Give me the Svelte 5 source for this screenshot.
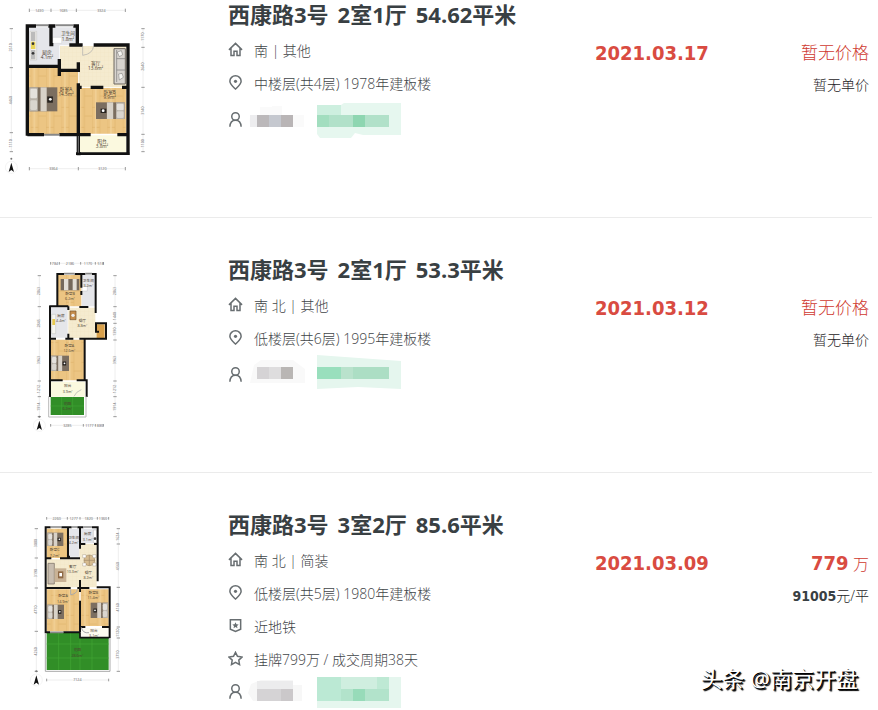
<script>
  const listings = [
    {
      plan: 'a',
      title: ['西康路3号', '2室1厅', '54.62平米'],
      lines: [['house', '南 | 其他'], ['pin', '中楼层(共4层) 1978年建板楼']],
      date: '2021.03.17'
    },
    {
      plan: 'b',
      title: ['西康路3号', '2室1厅', '53.3平米'],
      lines: [['house', '南 北 | 其他'], ['pin', '低楼层(共6层) 1995年建板楼']],
      date: '2021.03.12'
    },
    {
      plan: 'c',
      title: ['西康路3号', '3室2厅', '85.6平米'],
      lines: [
        ['house', '南 北 | 简装'],
        ['pin', '低楼层(共5层) 1980年建板楼'],
        ['badge', '近地铁'],
        ['star', '挂牌799万 / 成交周期38天']
      ],
      date: '2021.03.09',
      total: '779',
      unit: '91005'
    }
  ];
</script>

{#snippet icon(name)}
  <svg class="icon" viewBox="0 0 16 16" aria-hidden="true">
    {#if name === 'house'}
      <path d="M1 8.4 8 1.5 15 8.4M3.2 6.5V14.3H6.4V9.8H9.6V14.3H12.8V6.5" />
    {:else if name === 'pin'}
      <path d="M8 15C5.5 12.6 2 9.8 2 6.6A6 5.7 0 0 1 14 6.6C14 9.8 10.5 12.6 8 15Z" />
      <circle class="solid" cx="8" cy="6.7" r="1.7" />
    {:else if name === 'badge'}
      <path d="M2.5 1.8H13.5V12L8 14.4 2.5 12Z" />
      <path class="solid" d="m8 4.4 1 2.2 2.4.3-1.8 1.6.5 2.4L8 9.7l-2.1 1.2.5-2.4-1.8-1.6 2.4-.3Z" />
    {:else if name === 'star'}
      <path d="m8 1.4 2.1 4.3 4.9.7-3.5 3.3.8 4.8L8 12.2l-4.3 2.3.8-4.8L1 6.4l4.9-.7Z" />
    {:else}
      <circle cx="8" cy="4.8" r="4" />
      <path d="M2 15.8C2.2 11.6 4.4 8.8 8 8.8S13.8 11.6 14 15.8" />
    {/if}
  </svg>
{/snippet}

{#snippet label(x, y, name, area)}
  <text {x} {y}>{name}</text>
  <text {x} y={y + 16}>{area}m²</text>
{/snippet}

{#snippet bed(x, y, w, h)}
  <rect {x} {y} width={w} height={h} fill="#7b6e60" />
  <rect {x} {y} width={w * 0.3} height={h} fill="#b9b3aa" />
  <rect x={x + w * 0.4} {y} width={w * 0.22} height={h} fill="#d8d2c8" />
  <rect x={x + 3} y={y + 4} width={w * 0.24} height={h * 0.4} rx="4" fill="#e4e1dc" />
  <rect x={x + 3} y={y + h * 0.54} width={w * 0.24} height={h * 0.4} rx="4" fill="#d9d5ce" />
  <rect x={x + w * 0.64} y={y + h * 0.38} width={w * 0.2} height={h * 0.26} fill="#27231f" />
  <circle cx={x + w * 0.75} cy={y + h * 0.5} r={w * 0.05} fill="#fff" />
{/snippet}

{#snippet bedFlip(x, y, w, h)}
  <g transform="translate({2 * x + w} 0) scale(-1 1)">{@render bed(x, y, w, h)}</g>
{/snippet}

{#snippet compass(x, y)}
  <circle cx={x} cy={y} r="18" fill="none" stroke="#ddd" />
  <path d="M{x} {y - 14}l8 28-8-6-8 6Z" fill="#111" />
  <circle cx={x} cy={y - 26} r="3" fill="#777" />
{/snippet}

{#snippet woods()}
  <defs>
    <pattern id="wood" width="46" height="60" patternUnits="userSpaceOnUse">
      <rect width="46" height="60" fill="#ecc583" />
      <path d="M0 0V60M23 0V60M0 22H23M23 48H46" stroke="#e0b26c" stroke-width="2" />
      <path d="M11 0V60" stroke="#f1d095" stroke-width="5" />
    </pattern>
    <pattern id="tile" width="12" height="12" patternUnits="userSpaceOnUse">
      <rect width="12" height="12" fill="#f5ebcf" />
      <path d="M0 0H12M0 0V12" stroke="#eee0bd" />
    </pattern>
  </defs>
{/snippet}

{#snippet planA()}
  <svg class="plan" viewBox="0 0 480 540" role="img" aria-label="户型图">
    {@render woods()}
    <path class="dim" d="M88 31H376M34 86V455M429 86V455M88 506H376" />
    <path class="tick" d="M88 26V36M153 26V36M229 26V36M376 26V36M29 86H39M29 203H39M29 398H39M29 455H39M424 86H434M424 142H434M424 262H434M424 403H434M424 455H434M88 501V511M235 501V511M376 501V511" />
    <g class="scale">
      <text x="118" y="35">1430</text><text x="190" y="35">1685</text><text x="304" y="35">3324</text>
      <text x="160" y="510">3364</text><text x="307" y="510">3120</text>
      <text transform="translate(37 142) rotate(-90)">2510</text><text transform="translate(37 300) rotate(-90)">4460</text>
      <text transform="translate(37 430) rotate(-90)">1110</text>
      <text transform="translate(433 110) rotate(-90)">1170</text><text transform="translate(433 200) rotate(-90)">2640</text>
      <text transform="translate(433 332) rotate(-90)">3140</text><text transform="translate(433 430) rotate(-90)">1100</text>
    </g>
    <path d="M82 78H232V135H384V462H232V404H82Z" fill="#fff" />
    <path d="M86 82H178V198H86ZM153 82H228V136H153Z" fill="#e5e6ea" />
    <path d="M180 138H380V262H236V210H180Z" fill="url(#tile)" />
    <path d="M86 203H178V211H234V402H86ZM238 264H379V401H238Z" fill="url(#wood)" />
    <path d="M236 406H378V458H236Z" fill="#fbf9df" />
    <path d="M90 94H110V180H90Z" fill="#f3f1ec" stroke="#aaa" />
    <path d="M93 96H106V123H93ZM93 150H106V178H93Z" fill="#bbb" />
    <path d="M93 125H106V147H93Z" fill="#e9d558" />
    <circle cx="99" cy="131" r="4" fill="#333" /><circle cx="99" cy="160" r="4" fill="#333" />
    <path d="M158 112H185V130H158Z" fill="#fff" stroke="#bbb" />
    <path d="M342 146H376V252H342Z" fill="#d8d4cf" stroke="#6d665f" stroke-width="3" />
    <path d="M350 176H376M350 210H376M350 150V246" stroke="#777" stroke-width="2" />
    <path d="M352 156l12-4 4 12-10 6ZM356 222l10-2 4 12-12 8Z" fill="#f6f5f2" stroke="#333" />
    {@render bed(88, 262, 84, 72)}
    {@render bedFlip(288, 307, 86, 50)}
    <path class="wall" d="M82 407V78H108M145 78H166M153 78V134H160M220 78H232V135H248M281 135H384V465M208 135H232M82 199H178V177M178 199V228M178 211H235V187M235 250V461H242M235 262H245M272 262H310M366 262H384M82 404H132M178 404H272M352 404H384" />
    <path d="M228 461H388" stroke="#111" stroke-width="8" />
    <path d="M108 76H145M166 76H220M132 404H178" stroke="#888" stroke-width="6" />
    <path d="M248 138V166Q278 162 281 138M235 408V458" fill="none" stroke="#aaa" stroke-width="2" />
    {@render label(141, 162, '厨房', '4.1')}
    {@render label(204, 106, '卫生间', '1.8')}
    {@render label(287, 195, '客厅', '13.6')}
    {@render label(198, 272, '卧室A', '14.5')}
    {@render label(329, 281, '卧室B', '9.9')}
    {@render label(306, 428, '阳台', '3.8')}
    {@render compass(34, 502)}
  </svg>
{/snippet}

{#snippet planB()}
  <svg class="plan" viewBox="-60 0 480 540" role="img" aria-label="户型图">
    <path class="dim" d="M92 25H250M58 62V485M285 62V485M92 511H250" />
    <path class="tick" d="M92 21V29M118 21V29M182 21V29M226 21V29M250 21V29M53 62H63M53 155H63M53 250H63M53 378H63M53 425H63M53 485H63M280 62H290M280 155H290M280 205H290M280 255H290M280 378H290M280 425H290M280 485H290M92 507V515M190 507V515M226 507V515M250 507V515" />
    <g class="scale">
      <text x="105" y="29">784</text><text x="150" y="29">2186</text><text x="204" y="29">1170</text><text x="242" y="29">518</text>
      <text x="142" y="515">3285</text><text x="208" y="515">1177</text><text x="240" y="515">880</text>
      <text transform="translate(61 108) rotate(-90)">2863</text><text transform="translate(61 205) rotate(-90)">2845</text>
      <text transform="translate(61 315) rotate(-90)">3963</text><text transform="translate(61 402) rotate(-90)">1212</text>
      <text transform="translate(61 455) rotate(-90)">1914</text><text transform="translate(288 108) rotate(-90)">2863</text>
      <text transform="translate(288 183) rotate(-90)">1440</text><text transform="translate(288 230) rotate(-90)">1390</text>
      <text transform="translate(288 315) rotate(-90)">3963</text><text transform="translate(288 402) rotate(-90)">1212</text>
      <text transform="translate(288 455) rotate(-90)">1914</text>
    </g>
    <path d="M114 60H184V154H114ZM92 254H193V376H92Z" fill="url(#wood)" />
    <path d="M186 60H226V154H186ZM92 158H143V248H92Z" fill="#e5e6ea" />
    <path d="M145 158H226V206H250V250H145Z" fill="url(#tile)" />
    <path d="M230 208H254V252H230Z" fill="#d8a04b" />
    <path d="M92 380H195V425H92Z" fill="#fbf9df" />
    <path d="M92 426H192V480H92Z" fill="#318e27" />
    <path d="M125 426V480M158 426V480M92 453H192" stroke="#41a334" stroke-width="2" />
    <path d="M95 178H107V236H95Z" fill="#f5f5f0" stroke="#aaa" />
    <path d="M97 192H105V210H97Z" fill="#e7c951" />
    <path d="M186 94H202V108H186Z" fill="#fff" stroke="#aaa" />
    <path d="M122 72H178V106H122Z" fill="#75685b" /><path d="M132 72H145V106H132ZM158 72H170V106H158Z" fill="#e3ded6" />
    <path d="M150 168H168V194H150Z" fill="#c58d4c" stroke="#76512b" stroke-width="2" /><circle cx="159" cy="181" r="5" fill="#eee" />
    {@render bed(93, 302, 54, 46)}
    <path class="wall thin" d="M112 156V57H132M164 57H196M184 57V98M216 57H227V174M184 108V120M88 154H145M178 156H205M90 152V426M145 154V165M145 236V251M88 251H108M136 251H160M178 251H258V205H228V230H237M194 251V376H200V426M90 376H128M170 376H200" />
    <path d="M132 56H164M196 56H216" stroke="#888" stroke-width="5" />
    <path d="M86 424V486H198V424" fill="none" stroke="#bbb" stroke-width="3" />
    <path d="M162 424Q168 410 184 404" fill="none" stroke="#aaa" stroke-width="2" />
    <g class="small">
      {@render label(150, 120, '卧室B', '6.2')}
      {@render label(205, 80, '卫生间', '3.2')}
      {@render label(123, 186, '厨房', '4.4')}
      {@render label(187, 200, '餐厅', '8.8')}
      {@render label(148, 275, '卧室A', '12.6')}
      {@render label(143, 397, '阳台', '3.9')}
      {@render label(142, 450, '花园', '6.2')}
    </g>
    {@render compass(58, 511)}
  </svg>
{/snippet}

{#snippet planC()}
  <svg class="plan" viewBox="-60 6 480 540" role="img" aria-label="户型图">
    <path class="dim" d="M80 31H266M49 62V490M295 62V490M80 516H266" />
    <path class="tick" d="M80 27V35M142 27V35M180 27V35M232 27V35M266 27V35M44 62H54M44 150H54M44 240H54M44 370H54M44 490H54M290 62H300M290 108H300M290 238H300M290 357H300M290 390H300M290 490H300M80 512V520M266 512V520" />
    <g class="scale">
      <text x="110" y="35">2260</text><text x="161" y="35">1277</text><text x="206" y="35">1820</text><text x="249" y="35">1360</text>
      <text x="172" y="520">7124</text>
      <text transform="translate(52 105) rotate(-90)">3080</text><text transform="translate(52 195) rotate(-90)">3190</text>
      <text transform="translate(52 305) rotate(-90)">4710</text><text transform="translate(52 430) rotate(-90)">4260</text>
      <text transform="translate(298 86) rotate(-90)">1624</text><text transform="translate(298 174) rotate(-90)">4560</text>
      <text transform="translate(298 298) rotate(-90)">4160</text><text transform="translate(298 374) rotate(-90)">1120</text>
      <text transform="translate(298 440) rotate(-90)">3710</text>
    </g>
    <path d="M80 62H142V150H80ZM80 244H178V370H80ZM182 244H266V354H182Z" fill="url(#wood)" />
    <path d="M146 62H178V146H146ZM182 62H230V106H182Z" fill="#e5e6ea" />
    <path d="M80 154H178V108H230V238H80Z" fill="url(#tile)" />
    <path d="M182 360H266V388H182Z" fill="#fcfaf0" />
    <path d="M80 374H180V390H266V486H80Z" fill="#318e27" />
    <path d="M116 374V486M152 374V486M180 390V486M216 390V486M80 408H266M80 450H266" stroke="#42a735" stroke-width="2" />
    {@render bed(82, 74, 48, 40)}
    {@render bed(82, 290, 50, 43)}
    {@render bedFlip(212, 284, 52, 46)}
    <path d="M84 166H103V228H84Z" fill="#c8bdaf" stroke="#72685e" stroke-width="2" />
    <path d="M104 181H139V222H104Z" fill="#c9b295" /><path d="M114 190H130V211H114Z" fill="#8e6945" /><path d="M118 195H126V205H118Z" fill="#fff" />
    <circle cx="208" cy="157" r="16" fill="#d6bb8f" stroke="#a08a68" stroke-width="2" />
    <path d="M208 141V173M192 157H224" stroke="#a08a68" stroke-width="2" />
    <path d="M188 140H198V149H188ZM218 140H228V149H218ZM188 165H198V174H188ZM218 165H228V174H218Z" fill="#fff" stroke="#8c7c66" />
    <path d="M220 66H230V104H220Z" fill="#fff" stroke="#999" /><circle cx="225" cy="92" r="4" fill="#444" />
    <path class="wall thin" d="M77 376V58H92M124 58H155M144 58V146H150M172 58H190M180 58V122M216 58H233V108H222M180 108H196M77 151H94M120 151H180M233 108V220M180 216V238M75 240H152M172 240H208M230 238H269V390M180 240V252M180 278V373M77 373H90M130 373H180M180 357H196M246 357H269" />
    <path d="M92 57H124M155 57H172M190 57H216M90 373H130" stroke="#888" stroke-width="5" />
    <path d="M180 373V389H268" fill="none" stroke="#111" stroke-width="5" />
    <path d="M76 376V490H270V390M184 358Q188 377 207 374M152 244V260Q170 258 172 244" fill="none" stroke="#aaa" stroke-width="3" />
    <g class="small">
      {@render label(104, 130, '卧室C', '7.2')}
      {@render label(161, 93, '卫生间', '4.2')}
      {@render label(203, 82, '厨房', '3.1')}
      {@render label(158, 180, '客厅', '10.3')}
      {@render label(205, 198, '餐厅', '8.2')}
      {@render label(129, 268, '卧室A', '14.9')}
      {@render label(220, 258, '卧室B', '11.4')}
      {@render label(222, 372, '阳台', '3.1')}
      {@render label(172, 430, '花园', '28.6')}
    </g>
    {@render compass(49, 516)}
  </svg>
{/snippet}

{#snippet mosaic(plan)}
  <svg class="mosaic" viewBox="0 0 160 40" aria-hidden="true">
    {#if plan === 'a'}
      <path d="M12 7h12v-1h10v9h22v12H3q-3-6 0-12h9Z" fill="#fafafa" />
      <path d="M2 15H9V27H2Z" fill="#ededef" />
      <path d="M9 15H21V27H9Z" fill="#bbb8ba" /><path d="M21 15H33V27H21Z" fill="#c5c8cf" /><path d="M33 15H45V27H33Z" fill="#b9b5b6" />
      <path d="M69 5H93L96 3H153V35H115L107 33L103 38H72L69 34Z" fill="#e6f7ef" />
      <path d="M69 5H93V15H69Z" fill="#cdefdf" /><path d="M69 15H141V27H69Z" fill="#b1e1c9" />
      <path d="M69 15H81V27H69Z" fill="#a2debf" /><path d="M105 15H117V27H105Z" fill="#8ed6b1" />
    {:else if plan === 'b'}
      <path d="M6 10 13 5H45L57 14V28H2Z" fill="#f9f9f9" />
      <path d="M9 12H21V24H9Z" fill="#d5d3d5" /><path d="M21 12H33V24H21Z" fill="#deddde" /><path d="M33 12H45V24H33Z" fill="#b9b6b4" />
      <path d="M69 0 153 6V34L110 32 69 34Z" fill="#e5f6ee" />
      <path d="M69 12H141V24H69Z" fill="#acdec4" /><path d="M69 12H93V24H69Z" fill="#99dfbd" /><path d="M93 12H105V24H93Z" fill="#b9e2cc" />
    {:else}
      <path d="M3 12 13 8H45V13H54V29H5L0 21Z" fill="#f7f7f7" />
      <path d="M9 9H45V17H9Z" fill="#ececed" /><path d="M9 17H45V29H9Z" fill="#d5d3d5" /><path d="M33 17H45V29H33Z" fill="#cbc8ca" />
      <path d="M69 5H153V36H69Z" fill="#e5f6ee" />
      <path d="M69 5H93V29H69Z" fill="#bbe9d4" /><path d="M93 5H141V17H93Z" fill="#cfeedf" /><path d="M93 17H141V29H93Z" fill="#b2e3cb" />
      <path d="M105 17H117V29H105Z" fill="#97dbb9" /><path d="M129 5H141V17H129Z" fill="#bee9d4" />
    {/if}
  </svg>
{/snippet}

<main>
  <ul class="list">
    {#each listings as item}
      <li class="item">
        <a class="picture" href="#{item.plan}">
          {#if item.plan === 'a'}{@render planA()}{:else if item.plan === 'b'}{@render planB()}{:else}{@render planC()}{/if}
        </a>
        <div class="details">
          <h2><a href="#{item.plan}">{#each item.title as part}<span>{part}</span>{/each}</a></h2>
          {#each item.lines as [name, text]}
            <div class="line">{@render icon(name)}<span>{text}</span></div>
          {/each}
          <div class="line agent" class:spaced={item.lines.length < 3}>
            {@render icon('person')}{@render mosaic(item.plan)}
          </div>
        </div>
        <div class="date">{item.date}</div>
        <div class="price">
          {#if item.total}
            <div class="total"><b>{item.total}</b> <small>万</small></div>
            <div class="unit"><b>{item.unit}</b>元/平</div>
          {:else}
            <div class="total">暂无价格</div>
            <div class="unit">暂无单价</div>
          {/if}
        </div>
      </li>
    {/each}
  </ul>
  <div class="watermark">头条 @南京开盘</div>
</main>

<style>
  :global(body) {
    margin: 0;
    background: #fff;
  }
  main {
    position: relative;
    font-family: 'Open Sans', 'Noto Sans CJK SC', sans-serif;
    font-size: 14px;
    color: #394043;
  }
  .list {
    margin: 0 6px 0 0;
    padding: 0;
    list-style: none;
  }
  .item {
    display: grid;
    grid-template-columns: 228px minmax(0, 1fr) 120px 154px;
    padding: 37px 3px 37px 0;
    border-bottom: 1px solid #ebebeb;
  }
  .item:first-child {
    padding-top: 0;
  }
  .item:last-child {
    padding-bottom: 0;
    border-bottom: 0;
  }
  .picture,
  .plan {
    display: block;
  }
  .plan {
    width: 160px;
    height: 180px;
  }
  .plan text {
    font-size: 14px;
    text-anchor: middle;
    fill: #4c4030;
  }
  .plan .small text {
    font-size: 11px;
  }
  .plan .scale text {
    font-size: 11px;
    fill: #666;
  }
  .dim {
    fill: none;
    stroke: #e6e6e6;
    stroke-width: 2;
  }
  .tick {
    stroke: #999;
    stroke-width: 3;
  }
  .wall {
    fill: none;
    stroke: #111;
    stroke-width: 10;
  }
  .wall.thin {
    stroke-width: 6;
  }
  h2 {
    margin: 0 0 5px;
    font-size: 22px;
    line-height: 28px;
    font-weight: 700;
  }
  h2 a {
    display: flex;
    gap: 9px;
    color: inherit;
    text-decoration: none;
    white-space: nowrap;
  }
  .line {
    display: flex;
    align-items: center;
    gap: 11px;
    height: 33px;
    color: #3f4548;
    white-space: nowrap;
  }
  .agent {
    gap: 5px;
  }
  .spaced {
    margin-top: 4px;
  }
  .icon {
    flex: none;
    width: 15px;
    height: 15px;
    fill: none;
    stroke: #686e71;
    stroke-width: 1.6;
  }
  .solid {
    fill: #686e71;
    stroke: none;
  }
  .mosaic {
    flex: none;
    width: 160px;
    height: 40px;
  }
  .date,
  .price {
    padding-top: 37px;
  }
  .date,
  .total {
    line-height: 32px;
    color: #d94b41;
  }
  .total {
    color: #cf3a30;
  }
  .date,
  .total b {
    font-family: 'DejaVu Sans Condensed', 'DejaVu Sans', sans-serif;
    font-size: 20px;
    font-weight: 700;
    color: #d94b41;
  }
  .line,
  .total,
  .unit,
  .watermark {
    font-weight: 300;
  }
  .total b,
  .unit b {
    font-weight: 700;
  }
  .price {
    text-align: right;
    white-space: nowrap;
  }
  .total {
    font-size: 17px;
  }
  .total small {
    font-size: 16px;
  }
  .unit {
    line-height: 32px;
    color: #1c2225;
  }
  .unit b {
    font-family: 'DejaVu Sans Condensed', 'DejaVu Sans', sans-serif;
    color: #394043;
  }
  .watermark {
    position: absolute;
    right: 20px;
    bottom: 14px;
    font-size: 22px;
    line-height: 32px;
    font-weight: 400;
    color: #fff;
    text-shadow: 1px 1px 0 #000, 2px 2px 1px #000;
  }
</style>
